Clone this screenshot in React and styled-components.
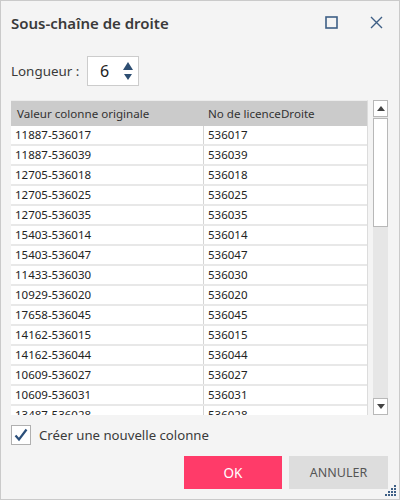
import React from "react";
import styled, {createGlobalStyle} from "styled-components";

const GlobalStyle = createGlobalStyle`
  html, body {
    margin: 0;
    padding: 0;
    background: #ffffff;
  }
  body {
    font-family: "Noto Sans", "Open Sans", sans-serif;
  }
  * {
    box-sizing: border-box;
  }
`;

const rows = [
    ["11887-536017", "536017"],
    ["11887-536039", "536039"],
    ["12705-536018", "536018"],
    ["12705-536025", "536025"],
    ["12705-536035", "536035"],
    ["15403-536014", "536014"],
    ["15403-536047", "536047"],
    ["11433-536030", "536030"],
    ["10929-536020", "536020"],
    ["17658-536045", "536045"],
    ["14162-536015", "536015"],
    ["14162-536044", "536044"],
    ["10609-536027", "536027"],
    ["10609-536031", "536031"],
    ["13487-536028", "536028"],
];

const Dialog = styled.div`
  position: relative;
  width: 400px;
  height: 500px;
  border: 1px solid #cacaca;
  background: #f4f4f4;
  padding: 0 11px 0 10px;
  display: flex;
  flex-direction: column;
  color: #333;
`;

const TitleBar = styled.div`
  height: 43px;
  display: flex;
  align-items: center;
`;

const Title = styled.div`
  flex: 1;
  font-size: 15px;
  font-weight: 600;
  color: #3a3a3a;
  padding-top: 1px;
`;

const WindowButton = styled.div`
  width: 14px;
  height: 14px;
  display: flex;
  align-items: center;
  justify-content: center;
  margin-left: ${p => p.$gap || 0}px;
  margin-right: ${p => p.$right || 0}px;
`;

const LengthRow = styled.div`
  margin-top: 12px;
  height: 30px;
  display: flex;
  align-items: center;
`;

const Label = styled.span`
  font-size: 13.4px;
  color: #3a3a3a;
  width: 76px;
`;

const Spinner = styled.div`
  width: 52px;
  height: 30px;
  background: #fff;
  border: 1px solid #cccccc;
  display: flex;
  align-items: center;
  padding-left: 12px;
`;

const SpinValue = styled.span`
  font-size: 16px;
  color: #222;
  width: 23px;
`;

const SpinArrows = styled.div`
  display: flex;
  flex-direction: column;
  gap: 4px;
  margin-top: 0px;
`;

const GridArea = styled.div`
  margin-top: 14px;
  height: 315px;
  display: flex;
`;

const Table = styled.div`
  width: 358px;
  height: 100%;
  overflow: hidden;
  border-top: 1px solid #ececec;
  border-right: 1px solid #dcdcdc;
  background: #ffffff;
`;

const HeaderRow = styled.div`
  height: 25px;
  display: grid;
  grid-template-columns: 192px 1fr;
  background: #cbcbcb;
  align-items: center;
  font-size: 11.6px;
  color: #333;
`;

const HeaderCell = styled.div`
  padding-left: ${p => p.$pad}px;
`;

const Row = styled.div`
  height: 20px;
  display: grid;
  grid-template-columns: 192px 1fr;
  border-bottom: 2px solid #e8e8e8;
  font-size: 11.5px;
  color: #222;
  background: #fff;
`;

const Cell = styled.div`
  padding-left: 4px;
  line-height: 18px;
  border-left: ${p => (p.$divider ? "1px solid #d4d4d4" : "none")};
`;

const ScrollBar = styled.div`
  width: 15px;
  margin-left: 5px;
  display: flex;
  flex-direction: column;
  background: #e6e6e6;
`;

const ScrollButton = styled.div`
  height: 17px;
  background: #fff;
  border: 1px solid #b8b8b8;
  display: flex;
  align-items: center;
  justify-content: center;
  margin-top: ${p => (p.$bottom ? "auto" : "0")};
`;

const Thumb = styled.div`
  height: 109px;
  margin-top: 1px;
  background: #fff;
  border: 1px solid #b8b8b8;
`;

const CheckRow = styled.div`
  margin-top: 10px;
  height: 20px;
  display: flex;
  align-items: center;
  gap: 8px;
`;

const CheckBox = styled.div`
  width: 20px;
  height: 20px;
  background: #fff;
  border: 1px solid #b0b0b0;
  display: flex;
  align-items: center;
  justify-content: center;
`;

const CheckLabel = styled.span`
  font-size: 13.2px;
  color: #3a3a3a;
`;

const ButtonRow = styled.div`
  margin-top: 11px;
  display: flex;
  justify-content: flex-end;
  gap: 7px;
`;

const Button = styled.div`
  width: ${p => p.$w}px;
  height: 33px;
  display: flex;
  align-items: center;
  justify-content: center;
  background: ${p => (p.$primary ? "#ff3b69" : "#dddddd")};
  color: ${p => (p.$primary ? "#ffffff" : "#555555")};
  font-size: ${p => (p.$primary ? 13.5 : 12.5)}px;
`;

const Grip = styled.svg`
  position: absolute;
  right: 2px;
  bottom: 2px;
`;

const gripDots = [
    [9, 0],
    [6, 3], [9, 3],
    [3, 6], [6, 6], [9, 6],
    [0, 9], [3, 9], [6, 9], [9, 9],
];

const App = () => {
    return (
        <>
            <GlobalStyle/>
            <Dialog>
                <TitleBar>
                    <Title>Sous-chaîne de droite</Title>
                    <WindowButton>
                        <svg width="13" height="13" viewBox="0 0 13 13">
                            <rect x="1" y="1" width="11" height="11" fill="none" stroke="#3e5f86" strokeWidth="1.6"/>
                        </svg>
                    </WindowButton>
                    <WindowButton $gap={31} $right={5}>
                        <svg width="13" height="13" viewBox="0 0 13 13">
                            <path d="M1 1 L12 12 M12 1 L1 12" stroke="#3e5f86" strokeWidth="1.4" fill="none"/>
                        </svg>
                    </WindowButton>
                </TitleBar>

                <LengthRow>
                    <Label>Longueur :</Label>
                    <Spinner>
                        <SpinValue>6</SpinValue>
                        <SpinArrows>
                            <svg width="10" height="8" viewBox="0 0 10 8">
                                <path d="M5 0 L10 8 L0 8 Z" fill="#2d4e72"/>
                            </svg>
                            <svg width="10" height="6" viewBox="0 0 10 6">
                                <path d="M1 0 L9 0 L5 6 Z" fill="#2d4e72"/>
                            </svg>
                        </SpinArrows>
                    </Spinner>
                </LengthRow>

                <GridArea>
                    <Table>
                        <HeaderRow>
                            <HeaderCell $pad={6}>Valeur colonne originale</HeaderCell>
                            <HeaderCell $pad={5}>No de licenceDroite</HeaderCell>
                        </HeaderRow>
                        {rows.map(([original, right]) => (
                            <Row key={original + right}>
                                <Cell>{original}</Cell>
                                <Cell $divider>{right}</Cell>
                            </Row>
                        ))}
                    </Table>
                    <ScrollBar>
                        <ScrollButton>
                            <svg width="8" height="5" viewBox="0 0 8 5">
                                <path d="M4 0 L8 5 L0 5 Z" fill="#444"/>
                            </svg>
                        </ScrollButton>
                        <Thumb/>
                        <ScrollButton $bottom>
                            <svg width="8" height="5" viewBox="0 0 8 5">
                                <path d="M0 0 L8 0 L4 5 Z" fill="#444"/>
                            </svg>
                        </ScrollButton>
                    </ScrollBar>
                </GridArea>

                <CheckRow>
                    <CheckBox>
                        <svg width="16" height="16" viewBox="0 0 16 16">
                            <path d="M2.5 8.5 L6 12.5 L13.5 2.5" fill="none" stroke="#2b4f7a" strokeWidth="2.2"/>
                        </svg>
                    </CheckBox>
                    <CheckLabel>Créer une nouvelle colonne</CheckLabel>
                </CheckRow>

                <ButtonRow>
                    <Button $primary $w={98}>OK</Button>
                    <Button $w={99}>ANNULER</Button>
                </ButtonRow>

                <Grip width="12" height="12" viewBox="0 0 12 12">
                    {gripDots.map(([x, y]) => (
                        <rect key={x + "-" + y} x={x} y={y} width="2" height="2" fill="#3e5f86"/>
                    ))}
                </Grip>
            </Dialog>
        </>
    );
};

export default App;
